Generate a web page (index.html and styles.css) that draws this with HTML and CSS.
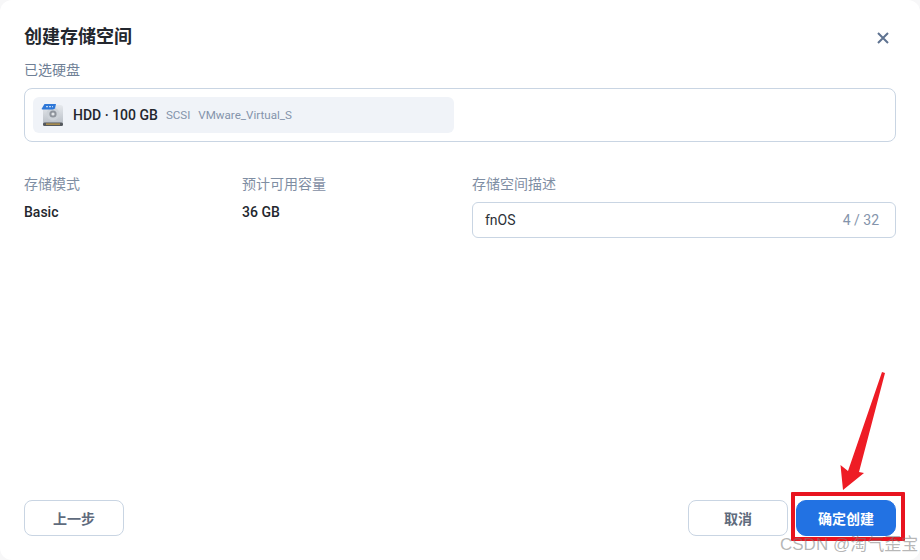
FILE: index.html
```html
<!DOCTYPE html>
<html lang="zh-CN">
<head>
<meta charset="utf-8">
<title>创建存储空间</title>
<link rel="stylesheet" href="styles.css">
</head>
<body>
<div class="dialog">
  <header class="head">
    <h1 class="title">创建存储空间</h1>
    <svg class="close" width="12" height="12" viewBox="0 0 12 12"><path d="M1 1L11 11M11 1L1 11" stroke="#5f7391" stroke-width="2" fill="none"/></svg>
  </header>
  <div class="label selected-label">已选硬盘</div>
  <div class="disk-box">
    <div class="chip">
      <svg class="hdd" width="24" height="24" viewBox="0 0 24 24">
        <defs><linearGradient id="b" x1="0" y1="0" x2="0" y2="1"><stop offset="0" stop-color="#e6e9ed"/><stop offset="1" stop-color="#b4bac2"/></linearGradient></defs>
        <rect x="2" y="2" width="20" height="21" rx="2.5" fill="url(#b)"/>
        <rect x="2" y="19.500" width="20" height="3.500" rx="1.500" fill="#55595e"/>
        <rect x="5" y="20.500" width="14" height="1.200" fill="#c9a24a"/>
        <circle cx="12" cy="11" r="6.500" fill="#cdd2d8"/>
        <circle cx="12" cy="11" r="3.600" fill="#8f949c"/>
        <circle cx="12" cy="11" r="1.600" fill="#e2e5e8"/>
        <path d="M0.500 6L3.500 1H15L14 5.500L12 6.500H1.500Z" fill="#2f78d8"/>
        <path d="M5 3.600H12" stroke="#bcd6f5" stroke-width="1.100" stroke-dasharray="2 1"/>
      </svg>
      <span class="disk-name">HDD · 100 GB</span>
      <span class="disk-meta">SCSI</span>
      <span class="disk-meta">VMware_Virtual_S</span>
    </div>
  </div>
  <div class="fields">
    <div class="field">
      <div class="label">存储模式</div>
      <div class="value">Basic</div>
    </div>
    <div class="field">
      <div class="label">预计可用容量</div>
      <div class="value">36 GB</div>
    </div>
    <div class="field">
      <div class="label">存储空间描述</div>
      <div class="input"><span class="input-text">fnOS</span><span class="count">4 / 32</span></div>
    </div>
  </div>
  <footer class="foot">
    <button class="btn">上一步</button>
    <div class="foot-right">
      <button class="btn">取消</button>
      <button class="btn primary">确定创建</button>
    </div>
  </footer>
</div>
<div class="mark-rect"></div>
<svg class="mark-arrow" width="50" height="122" viewBox="0 0 50 122"><path d="M42 2L45 3L19 102L24 103L3 120L0.500 95L8 101Z" fill="#ee1c25"/></svg>
<div class="watermark">CSDN @淘气歪宝</div>
</body>
</html>
```
FILE: styles.css
```css
* { box-sizing: border-box; }
html, body { margin: 0; height: 100%; }
body {
  position: relative;
  width: 920px;
  height: 560px;
  overflow: hidden;
  background: #f7f7f8;
  font-family: Roboto, "Noto Sans CJK SC", sans-serif;
  color: #23272e;
}
.dialog {
  width: 920px;
  height: 560px;
  background: #fff;
  border-radius: 12px;
  padding: 26px 24px 24px;
  display: flex;
  flex-direction: column;
}
.head {
  height: 22px;
  display: flex;
  justify-content: space-between;
  align-items: center;
}
.title {
  margin: 0;
  font-size: 18px;
  line-height: 22px;
  font-weight: 700;
  color: #23272e;
}
.close { margin: 2px 7px 0 0; }
.label {
  font-size: 14px;
  line-height: 20px;
  color: #7f8ea3;
}
.selected-label { margin-top: 12px; color: #6f7f96; }
.disk-box {
  margin-top: 8px;
  height: 54px;
  border: 1px solid #c9d5e3;
  border-radius: 8px;
  padding: 8px;
}
.chip {
  width: 421px;
  height: 36px;
  background: #f0f3f8;
  border-radius: 6px;
  display: flex;
  align-items: center;
  padding-left: 8px;
}
.hdd { flex: none; }
.disk-name {
  margin-left: 8px;
  font-size: 14px;
  font-weight: 500;
  color: #23272e;
}
.disk-meta {
  margin-left: 8px;
  font-size: 11.600px;
  color: #8494ab;
}
.fields {
  margin-top: 32px;
  display: grid;
  grid-template-columns: 218px 230px 424px;
}
.value {
  margin-top: 8px;
  font-size: 14px;
  line-height: 20px;
  font-weight: 500;
  color: #23272e;
}
.input {
  margin-top: 8px;
  height: 36px;
  border: 1px solid #c9d5e3;
  border-radius: 6px;
  padding: 0 16px 0 12px;
  display: flex;
  align-items: center;
  justify-content: space-between;
  font-size: 14px;
}
.input-text { color: #2c3138; }
.count { color: #8494ab; }
.foot {
  margin-top: auto;
  display: flex;
  justify-content: space-between;
}
.foot-right { display: flex; gap: 8px; }
.btn {
  width: 100px;
  height: 36px;
  padding: 0;
  background: #fff;
  border: 1px solid #c9d5e3;
  border-radius: 8px;
  font-family: inherit;
  font-size: 14px;
  font-weight: 700;
  color: #5f6b7d;
}
.btn.primary {
  background: #2272e3;
  border-color: #2272e3;
  border-radius: 10px;
  color: #fff;
}
.mark-rect {
  position: absolute;
  left: 791px;
  top: 492px;
  width: 114px;
  height: 49px;
  border: 4px solid #e8141f;
  border-radius: 1px;
}
.mark-arrow {
  position: absolute;
  left: 840px;
  top: 370px;
}
.watermark {
  position: absolute;
  left: 780px;
  top: 535px;
  font-family: "Liberation Sans", "Noto Sans CJK SC", sans-serif;
  font-size: 17px;
  line-height: 20px;
  color: rgba(120,120,120,0.55);
}
```
